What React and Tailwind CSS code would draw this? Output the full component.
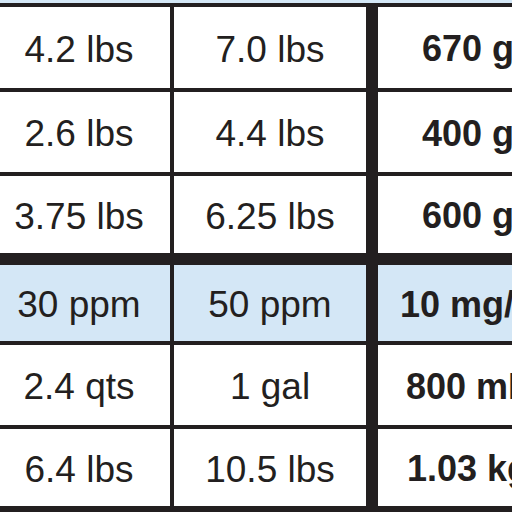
const rows = [
  { a: "4.2 lbs", b: "7.0 lbs", c: "670 g", h: "h-[81px]", border: "border-b-4" },
  { a: "2.6 lbs", b: "4.4 lbs", c: "400 g", h: "h-[80px]", border: "border-b-4" },
  { a: "3.75 lbs", b: "6.25 lbs", c: "600 g", h: "h-[77px]", border: "border-b-[12px]" },
  { a: "30 ppm", b: "50 ppm", c: "10 mg/L", h: "h-[76px]", border: "border-b-4", blue: true },
  { a: "2.4 qts", b: "1 gal", c: "800 mL", h: "h-[80px]", border: "border-b-4" },
  { a: "6.4 lbs", b: "10.5 lbs", c: "1.03 kg", h: "h-[77px]", border: "border-b-[12px]" },
];

function Row({ row }) {
  const bg = row.blue ? "bg-[#d4e7f6]" : "bg-white";
  return (
    <div className={`flex ${row.h} ${row.border} border-[#231f20] ${bg} box-content`}>
      <div className="w-[186px] shrink-0 border-r-4 border-[#231f20] flex items-center justify-center pt-[3px]">
        {row.a}
      </div>
      <div className="w-[204px] shrink-0 border-r-[12px] border-[#231f20] flex items-center justify-center pt-[3px]">
        {row.b}
      </div>
      <div className="w-[180px] shrink-0 flex items-center justify-center font-bold text-[36px] whitespace-nowrap pt-[3px]">
        {row.c}
      </div>
    </div>
  );
}

export default function App() {
  return (
    <div className="w-[512px] h-[512px] overflow-hidden bg-white text-[#231f20] font-['Liberation_Sans',Arial,sans-serif] text-[37px] leading-none">
      <div className="ml-[-12px] w-[582px]">
        <div className="h-[3px] bg-[#d4e7f6]" />
        <div className="h-[4px] bg-[#231f20]" />
        {rows.map((row, i) => (
          <Row key={i} row={row} />
        ))}
      </div>
    </div>
  );
}
